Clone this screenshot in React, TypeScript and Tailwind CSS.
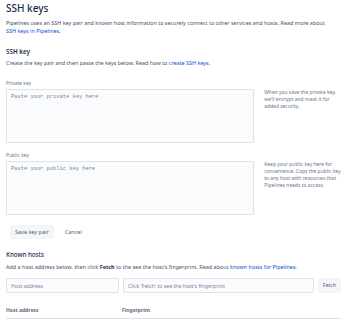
import { useState } from "react";

const font = { fontFamily: '"Noto Sans", "Liberation Sans", sans-serif' };

function KeyField({
  label,
  placeholder,
  help,
}: {
  label: string;
  placeholder: string;
  help: string;
}) {
  const [value, setValue] = useState("");
  return (
    <div>
      <div className="text-[4.9px] leading-[7px] text-[#6b778c]">{label}</div>
      <div className="mt-[2px] flex gap-[10px]">
        <textarea
          value={value}
          onChange={(e) => setValue(e.target.value)}
          placeholder={placeholder}
          className="h-[54px] w-[249px] resize-none rounded-[2px] border border-[#dfe1e6] bg-[#fafbfc] px-[4px] py-[3px] font-['Liberation_Mono',monospace] text-[5.4px] leading-[8px] text-[#172b4d] outline-none placeholder:text-[#7a869a]"
        />
        <p className="w-[79px] text-[4.95px] leading-[7px] text-[#6b778c]">{help}</p>
      </div>
    </div>
  );
}

export default function App() {
  const [host, setHost] = useState("");

  return (
    <div className="h-[321px] w-[349px] overflow-hidden bg-white px-[6px] pt-[2px] text-[#172b4d]" style={font}>
      <h1 className="text-[10px] font-medium leading-[13px]">SSH keys</h1>
      <p className="mt-[4px] w-[330px] text-[5.45px] leading-[8px] text-[#42526e]">
        Pipelines uses an SSH key pair and known host information to securely connect to other services and hosts. Read more about{" "}
        <a className="text-[#0052cc]">SSH keys in Pipelines</a>.
      </p>

      <h2 className="mt-[12px] text-[6.3px] font-semibold leading-[10px]">SSH key</h2>
      <p className="mt-[2px] text-[5.45px] leading-[8px] text-[#42526e]">
        Create the key pair and then paste the keys below. Read how to <a className="text-[#0052cc]">create SSH keys</a>.
      </p>

      <div className="mt-[13px]">
        <KeyField
          label="Private key"
          placeholder="Paste your private key here"
          help="When you save the private key, we'll encrypt and mask it for added security."
        />
      </div>
      <div className="mt-[9px]">
        <KeyField
          label="Public key"
          placeholder="Paste your public key here"
          help="Keep your public key here for convenience. Copy the public key to any host with resources that Pipelines needs to access."
        />
      </div>

      <div className="mt-[10px] flex items-center gap-[6px] pl-[4px]">
        <button className="h-[14px] rounded-[2px] bg-[#f4f5f7] px-[5px] text-[5.5px] text-[#505f79]">Save key pair</button>
        <button className="h-[14px] px-[5px] text-[5.5px] text-[#505f79]">Cancel</button>
      </div>

      <h2 className="mt-[11px] text-[6.2px] font-medium leading-[9px]">Known hosts</h2>
      <p className="mt-[4px] text-[5.45px] leading-[8px] text-[#42526e]">
        Add a host address below, then click <b className="font-bold text-[#172b4d]">Fetch</b> to the see the host's fingerprint. Read about{" "}
        <a className="text-[#0052cc]">known hosts for Pipelines</a>.
      </p>

      <div className="mt-[7px] flex w-[335px] items-center gap-[4px]">
        <input
          value={host}
          onChange={(e) => setHost(e.target.value)}
          placeholder="Host address"
          className="h-[15px] w-[113px] rounded-[2px] border border-[#dfe1e6] bg-[#fafbfc] px-[4px] text-[5.2px] outline-none placeholder:text-[#7a869a]"
        />
        <input
          readOnly
          placeholder="Click 'Fetch' to see the host's fingerprint"
          className="h-[15px] w-[191px] rounded-[2px] border border-[#dfe1e6] bg-[#fafbfc] px-[4px] text-[5.2px] outline-none placeholder:text-[#7a869a]"
        />
        <button className="h-[15px] flex-1 rounded-[2px] bg-[#f4f5f7] text-[5.3px] text-[#505f79]">Fetch</button>
      </div>

      <div className="mt-[14px] flex w-[335px] border-b border-[#dfe1e6] pb-[4px] text-[5px] font-bold leading-[7px] text-[#5e6c84]">
        <div className="w-[116px]">Host address</div>
        <div>Fingerprint</div>
      </div>
    </div>
  );
}
